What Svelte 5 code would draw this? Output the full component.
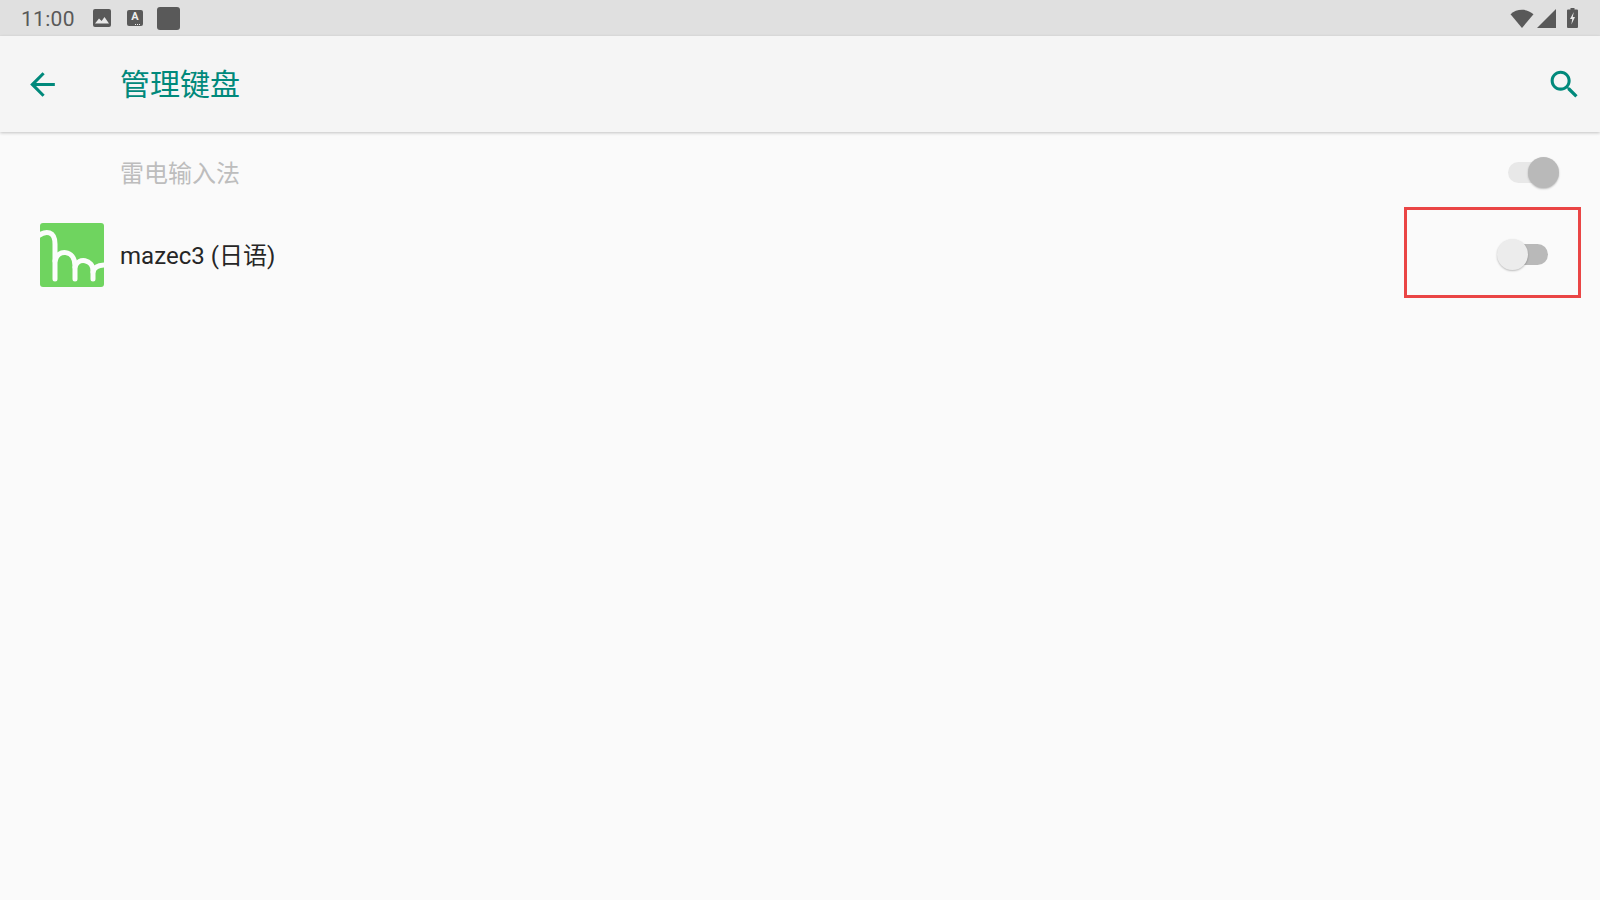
<script lang="ts">
    type Row = { id: string; label: string; on: boolean; disabled?: boolean; logo?: boolean };

    const rows: Row[] = [
        { id: 'thunder', label: '雷电输入法', on: true, disabled: true },
        { id: 'mazec', label: 'mazec3 (日语)', on: false, logo: true }
    ];
</script>

<div class="screen">
    <div class="status-bar">
        <span class="time">11:00</span>
        <svg class="st-image" viewBox="0 0 18 18" width="18" height="18">
            <rect x="0" y="0" width="18" height="18" rx="2" fill="#595959" />
            <path d="M2 14.5 L6 9.5 L8.6 12 L11.5 8 L16 14.5 Z" fill="#e8e8e8" />
        </svg>
        <span class="st-a">
            <span class="st-a-letter">A</span>
            <span class="st-a-dots"></span>
        </span>
        <span class="st-square"></span>
        <span class="spacer"></span>
        <svg class="st-wifi" viewBox="0 0 23 18" width="24" height="19">
            <path d="M0.5 5 C6.5 -0.7 16.5 -0.7 22.5 5 L11.5 18 Z" fill="#595959" />
        </svg>
        <svg class="st-signal" viewBox="0 0 18 18" width="19" height="19">
            <path d="M0 18 L18 0 V18 Z" fill="#595959" />
        </svg>
        <svg class="st-battery" viewBox="0 0 11 20" width="11" height="20">
            <path d="M3.5 0 H7.5 V1.5 H10 A1 1 0 0 1 11 2.5 V19 A1 1 0 0 1 10 20 H1 A1 1 0 0 1 0 19 V2.5 A1 1 0 0 1 1 1.5 H3.5 Z" fill="#595959" />
            <path d="M6.8 4 L3 11 H5.2 L4.4 16.5 L8 9 H5.8 Z" fill="#e8e8e8" />
        </svg>
    </div>

    <header class="app-bar">
        <svg class="back" viewBox="0 0 24 24" width="37" height="37">
            <path d="M20 11H7.83l5.59-5.59L12 4l-8 8 8 8 1.41-1.41L7.83 13H20v-2z" fill="#00897b" />
        </svg>
        <h1 class="title">管理键盘</h1>
        <svg class="search" viewBox="0 0 24 24" width="37" height="37">
            <path d="M15.5 14h-.79l-.28-.27C15.41 12.59 16 11.11 16 9.5 16 5.91 13.09 3 9.5 3S3 5.91 3 9.5 5.91 16 9.5 16c1.61 0 3.09-.59 4.23-1.57l.27.28v.79l5 4.99L20.49 19l-4.99-5zm-6 0C7.01 14 5 11.99 5 9.5S7.01 5 9.5 5 14 7.01 14 9.5 11.99 14 9.5 14z" fill="#00897b" />
        </svg>
    </header>

    <main class="list">
        {#each rows as row (row.id)}
            <div class="row" class:tall={row.logo} class:disabled={row.disabled}>
                <div class="icon-slot">
                    {#if row.logo}
                        <svg class="logo" viewBox="0 0 64 64" width="64" height="64">
                            <rect width="64" height="64" rx="3" fill="#6fd45f" />
                            <g fill="none" stroke="#fbfdfb" stroke-width="5" stroke-linecap="round">
                                <path d="M-2 13 C6 7 15 8 15 21 V56" />
                                <path d="M15 38 C17 26 35 26 35 43 V56" />
                                <path d="M35 44 C38 34 53 36 53 48 V56" />
                                <path d="M53 49 C54 44 59 42 66 42" />
                            </g>
                        </svg>
                    {/if}
                </div>
                <span class="label">{row.label}</span>
                <div class="switch" class:on={row.on}>
                    <span class="track"></span>
                    <span class="thumb"></span>
                </div>
            </div>
        {/each}
    </main>

    <div class="highlight"></div>
</div>

<style>
    :global(body) {
        margin: 0;
        background: #fafafa;
    }
    .screen {
        position: relative;
        display: flex;
        flex-direction: column;
        width: 1600px;
        height: 900px;
        overflow: hidden;
        background: #fafafa;
        font-family: Roboto, "Noto Sans CJK SC", sans-serif;
    }

    .status-bar {
        display: flex;
        align-items: center;
        height: 36px;
        padding: 0 22px 0 21px;
        background: #e0e0e0;
        color: #595959;
    }
    .time {
        width: 72px;
        font-size: 21px;
        letter-spacing: 0.3px;
        margin-bottom: -1px;
    }
    .st-a {
        position: relative;
        width: 16px;
        height: 16px;
        margin-left: 16px;
        border-radius: 2px;
        background: #595959;
        color: #eee;
        font-size: 11px;
        font-weight: 700;
        line-height: 14px;
        text-align: center;
    }
    .st-a-letter { display: block; }
    .st-a-dots {
        position: absolute;
        right: 2px;
        bottom: 1px;
        width: 6px;
        height: 1px;
        background: repeating-linear-gradient(90deg, #eee 0 1px, transparent 1px 2px);
    }
    .st-square {
        width: 23px;
        height: 23px;
        margin: 1px 0 0 14px;
        border-radius: 3px;
        background: #595959;
    }
    .spacer { flex: 1; }
    .st-signal { margin-left: 3px; }
    .st-battery { margin-left: 11px; }

    .app-bar {
        position: relative;
        z-index: 1;
        display: flex;
        align-items: center;
        height: 96px;
        padding: 0 17px 0 24px;
        background: #f5f5f5;
        box-shadow: 0 1px 3px rgba(0, 0, 0, 0.22);
    }
    .title {
        flex: 1;
        margin: 0 0 4px 59px;
        font-size: 30px;
        font-weight: 400;
        color: #00897b;
    }

    .list {
        padding: 5px 41px 0 0;
    }
    .row {
        display: flex;
        align-items: center;
        height: 72px;
    }
    .row.tall { height: 92px; }
    .icon-slot {
        display: flex;
        align-items: center;
        width: 80px;
        padding-left: 40px;
    }
    .logo { display: block; flex: none; }
    .label {
        flex: 1;
        margin-bottom: 4px;
        font-size: 24px;
        letter-spacing: 0.03px;
        color: #262626;
    }
    .disabled .label { color: #bdbdbd; }

    .switch {
        position: relative;
        width: 62px;
        height: 31px;
        margin-bottom: 2px;
    }
    .track {
        position: absolute;
        top: 5px;
        left: 11px;
        width: 40px;
        height: 21px;
        border-radius: 11px;
        background: #b9b9b9;
    }
    .thumb {
        position: absolute;
        top: 0;
        left: 0;
        width: 31px;
        height: 31px;
        border-radius: 50%;
        background: #ececec;
        box-shadow: 0 1px 2px rgba(0, 0, 0, 0.25);
    }
    .switch.on .thumb {
        left: 31px;
        background: #b9b9b9;
    }
    .disabled .track { background: #e8e8e8; }

    .highlight {
        position: absolute;
        left: 1404px;
        top: 207px;
        width: 177px;
        height: 91px;
        box-sizing: border-box;
        border: 3px solid #ea4545;
    }
</style>
